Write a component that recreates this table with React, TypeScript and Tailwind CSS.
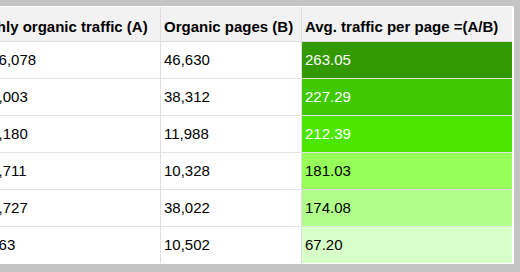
import React from "react";

type Row = {
    traffic: string;
    pages: string;
    avg: string;
    bg: string;
    text: string;
};

const rows: Row[] = [
    { traffic: "12,266,078", pages: "46,630", avg: "263.05", bg: "bg-[#339900]", text: "text-white" },
    { traffic: "8,708,003", pages: "38,312", avg: "227.29", bg: "bg-[#40c800]", text: "text-white" },
    { traffic: "2,546,180", pages: "11,988", avg: "212.39", bg: "bg-[#4de600]", text: "text-white" },
    { traffic: "1,869,711", pages: "10,328", avg: "181.03", bg: "bg-[#96ff5a]", text: "text-black" },
    { traffic: "6,618,727", pages: "38,022", avg: "174.08", bg: "bg-[#b1ff8a]", text: "text-black" },
    { traffic: "705,763", pages: "10,502", avg: "67.20", bg: "bg-[#d7ffc8]", text: "text-black" },
];

export default function App() {
    return (
        <div className="w-[520px] h-[272px] overflow-hidden bg-[#c4c4c4] pt-[6px] font-['Liberation_Sans',Arial,sans-serif] text-[15px] text-black">
            {/* table is scrolled right, so the first column is partly cut at the left edge */}
            <div className="ml-[-42px] w-[556px] border-t border-b border-r-2 border-white bg-white">
                {/* Header */}
                <div className="grid grid-cols-[203px_141px_210px] h-[35px] bg-[#f2f2f2] border-b border-[#dcdcdc] font-bold">
                    <div className="border-r border-[#dedede] pl-[3px] pt-[10px] leading-[20px] whitespace-nowrap">Monthly organic traffic (A)</div>
                    <div className="border-r border-[#dedede] pl-[3px] pt-[10px] leading-[20px] whitespace-nowrap">Organic pages (B)</div>
                    <div className="pl-[3px] pt-[10px] leading-[20px] whitespace-nowrap">Avg. traffic per page =(A/B)</div>
                </div>

                {/* Body */}
                {rows.map((r, i) => (
                    <div
                        key={r.avg}
                        className={`grid grid-cols-[203px_141px_210px] ${i === rows.length - 1 ? "h-[36px]" : "h-[37px] border-b border-[#e2e2e2]"}`}
                    >
                        <div className="border-r border-[#e0e0e0] pl-[3px] leading-[36px] whitespace-nowrap">{r.traffic}</div>
                        <div className="border-r border-[#e0e0e0] pl-[3px] leading-[36px]">{r.pages}</div>
                        <div className={`${r.bg} ${r.text} pl-[3px] leading-[36px]`}>{r.avg}</div>
                    </div>
                ))}
            </div>
        </div>
    );
}
